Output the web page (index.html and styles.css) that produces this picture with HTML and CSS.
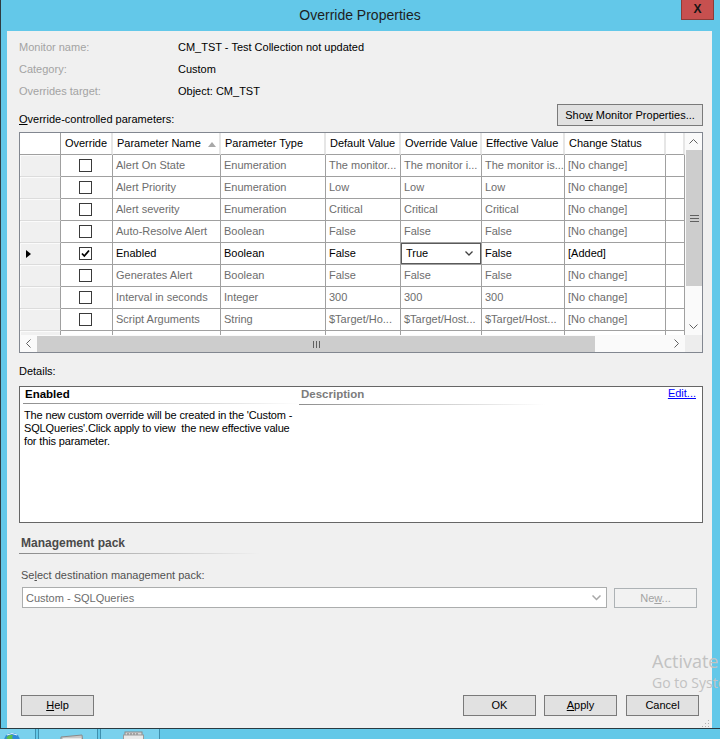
FILE: index.html
```html
<!DOCTYPE html>
<html>
<head>
<meta charset="utf-8">
<title>Override Properties</title>
<link rel="stylesheet" href="styles.css">
</head>
<body>
<div class="window">
  <div class="titlebar">
    <div class="title">Override Properties</div>
    <div class="close">X</div>
  </div>
  <div class="client">
    <div class="info">
      <div class="lbl">Monitor name:</div><div class="val">CM_TST - Test Collection not updated</div>
      <div class="lbl">Category:</div><div class="val">Custom</div>
      <div class="lbl">Overrides target:</div><div class="val">Object: CM_TST</div>
    </div>
    <div class="toolbar">
      <div class="cap"><u>O</u>verride-controlled parameters:</div>
      <button class="btn show">Sho<u>w</u> Monitor Properties...</button>
    </div>

    <div class="grid">
      <div class="gbody">
        <div class="row head">
          <div class="hc hc0"></div>
          <div class="hc center">Override</div>
          <div class="hc sort">Parameter Name<span class="sortarrow"></span></div>
          <div class="hc">Parameter Type</div>
          <div class="hc">Default Value</div>
          <div class="hc">Override Value</div>
          <div class="hc">Effective Value</div>
          <div class="hc">Change Status</div>
          <div class="hc"></div>
        </div>

        <div class="row">
          <div class="rh"></div>
          <div class="c chk"><span class="box"></span></div>
          <div class="c">Alert On State</div>
          <div class="c">Enumeration</div>
          <div class="c">The monitor...</div>
          <div class="c">The monitor i...</div>
          <div class="c">The monitor is...</div>
          <div class="c">[No change]</div>
          <div class="c"></div>
        </div>
        <div class="row">
          <div class="rh"></div>
          <div class="c chk"><span class="box"></span></div>
          <div class="c">Alert Priority</div>
          <div class="c">Enumeration</div>
          <div class="c">Low</div>
          <div class="c">Low</div>
          <div class="c">Low</div>
          <div class="c">[No change]</div>
          <div class="c"></div>
        </div>
        <div class="row">
          <div class="rh"></div>
          <div class="c chk"><span class="box"></span></div>
          <div class="c">Alert severity</div>
          <div class="c">Enumeration</div>
          <div class="c">Critical</div>
          <div class="c">Critical</div>
          <div class="c">Critical</div>
          <div class="c">[No change]</div>
          <div class="c"></div>
        </div>
        <div class="row">
          <div class="rh"></div>
          <div class="c chk"><span class="box"></span></div>
          <div class="c">Auto-Resolve Alert</div>
          <div class="c">Boolean</div>
          <div class="c">False</div>
          <div class="c">False</div>
          <div class="c">False</div>
          <div class="c">[No change]</div>
          <div class="c"></div>
        </div>
        <div class="row active">
          <div class="rh"><span class="pointer"></span></div>
          <div class="c chk"><span class="box"><svg width="11" height="11" viewBox="0 0 11 11"><path d="M2 5.5 L4.3 8 L9 2.5" fill="none" stroke="#000" stroke-width="1.8"/></svg></span></div>
          <div class="c">Enabled</div>
          <div class="c">Boolean</div>
          <div class="c">False</div>
          <div class="c editing"><div class="gcombo"><span>True</span><svg width="8" height="5" viewBox="0 0 8 5"><path d="M0.5 0.5 L4 4 L7.5 0.5" fill="none" stroke="#404040" stroke-width="1.3"/></svg></div></div>
          <div class="c">False</div>
          <div class="c">[Added]</div>
          <div class="c"></div>
        </div>
        <div class="row">
          <div class="rh"></div>
          <div class="c chk"><span class="box"></span></div>
          <div class="c">Generates Alert</div>
          <div class="c">Boolean</div>
          <div class="c">False</div>
          <div class="c">False</div>
          <div class="c">False</div>
          <div class="c">[No change]</div>
          <div class="c"></div>
        </div>
        <div class="row">
          <div class="rh"></div>
          <div class="c chk"><span class="box"></span></div>
          <div class="c">Interval in seconds</div>
          <div class="c">Integer</div>
          <div class="c num">300</div>
          <div class="c num">300</div>
          <div class="c num">300</div>
          <div class="c">[No change]</div>
          <div class="c"></div>
        </div>
        <div class="row">
          <div class="rh"></div>
          <div class="c chk"><span class="box"></span></div>
          <div class="c">Script Arguments</div>
          <div class="c">String</div>
          <div class="c">$Target/Ho...</div>
          <div class="c">$Target/Host...</div>
          <div class="c">$Target/Host...</div>
          <div class="c">[No change]</div>
          <div class="c"></div>
        </div>
        <div class="row partial">
          <div class="rh"></div>
          <div class="c"></div><div class="c"></div><div class="c"></div><div class="c"></div>
          <div class="c"></div><div class="c"></div><div class="c"></div><div class="c"></div>
        </div>
      </div>

      <div class="vscroll">
        <div class="arrow"><svg width="17" height="17" viewBox="0 0 17 17"><path d="M4.5 10.5 L8.5 6.5 L12.5 10.5" fill="none" stroke="#606060"/></svg></div>
        <div class="vthumb"><svg width="9" height="7" viewBox="0 0 9 7"><path d="M0 0.5 H9 M0 3.5 H9 M0 6.5 H9" stroke="#606060"/></svg></div>
        <div class="track"></div>
        <div class="arrow"><svg width="17" height="17" viewBox="0 0 17 17"><path d="M4.5 6.5 L8.5 10.5 L12.5 6.5" fill="none" stroke="#606060"/></svg></div>
      </div>
      <div class="hscroll">
        <div class="arrow"><svg width="17" height="17" viewBox="0 0 17 17"><path d="M10.5 4.5 L6.5 8.5 L10.5 12.5" fill="none" stroke="#606060"/></svg></div>
        <div class="hthumb"><svg width="7" height="7" viewBox="0 0 7 7"><path d="M0.5 0 V7 M3.5 0 V7 M6.5 0 V7" stroke="#606060"/></svg></div>
        <div class="track"></div>
        <div class="arrow"><svg width="17" height="17" viewBox="0 0 17 17"><path d="M6.5 4.5 L10.5 8.5 L6.5 12.5" fill="none" stroke="#606060"/></svg></div>
      </div>
      <div class="corner"></div>
    </div>

    <div class="cap details-lbl">Details:</div>
    <div class="details">
      <div class="dleft">
        <div class="dhead">Enabled</div>
        <p class="dtext">The new custom override will be created in the 'Custom -<br>SQLQueries'.Click apply to view&nbsp; the new effective value<br>for this parameter.</p>
      </div>
      <div class="dright">
        <div class="dhead dhead2">Description</div>
      </div>
      <a class="edit" href="#">Edit...</a>
    </div>

    <div class="mp-head">Management pack</div>
    <div class="mp-line"></div>
    <div class="cap sel-lbl">Se<u>l</u>ect destination management pack:</div>
    <div class="mp-row">
      <div class="combo"><span>Custom - SQLQueries</span><svg width="9" height="6" viewBox="0 0 9 6"><path d="M0.5 0.5 L4.5 4.5 L8.5 0.5" fill="none" stroke="#a8a8a8" stroke-width="1.5"/></svg></div>
      <button class="btn new" disabled>Ne<u>w</u>...</button>
    </div>

    <div class="actions">
      <button class="btn act help"><u>H</u>elp</button>
      <button class="btn act ok">OK</button>
      <button class="btn act apply"><u>A</u>pply</button>
      <button class="btn act cancel">Cancel</button>
    </div>
    <svg class="grip" width="9" height="9" viewBox="0 0 9 9"><g fill="#b0b0b0"><rect x="7" y="1" width="1" height="1"/><rect x="4" y="4" width="1" height="1"/><rect x="7" y="4" width="1" height="1"/><rect x="1" y="7" width="1" height="1"/><rect x="4" y="7" width="1" height="1"/><rect x="7" y="7" width="1" height="1"/></g></svg>
  </div>
</div>

<div class="taskbar">
  <div class="tb tb1"><svg width="18" height="18" viewBox="0 0 18 18"><circle cx="9" cy="9" r="8" fill="#2f8ad8"/><path d="M3 6 Q6 2 10 3 Q8 6 11 8 Q7 9 5 7 Z" fill="#5cc04a"/><path d="M4 3 Q9 0 14 3" fill="none" stroke="#e8f4ff" stroke-width="1"/></svg></div>
  <div class="tb tb2"><svg width="24" height="10" viewBox="0 0 24 10"><path d="M1 4 L22 2 L23 10 L1 10 Z" fill="#c8c8c8" stroke="#8a8a8a"/><rect x="3" y="5" width="18" height="5" fill="#e6e6e6"/></svg></div>
  <div class="tb tb3"><svg width="21" height="10" viewBox="0 0 21 10"><rect x="2" y="1" width="17" height="9" fill="#d8d8d8" stroke="#8a8a8a"/><path d="M5 2 V4 M8 2 V4 M11 2 V4 M14 2 V4" stroke="#707070"/><rect x="0.5" y="4" width="20" height="6" fill="#eaeaea" stroke="#9a9a9a"/></svg></div>
</div>

<div class="watermark">
  <div class="wm1">Activate Windows</div>
  <div class="wm2">Go to System in Control Panel to activate Windows.</div>
</div>
</body>
</html>
```

FILE: styles.css
```css
* { box-sizing: border-box; margin: 0; padding: 0; }
html, body { width: 720px; height: 739px; overflow: hidden; }
body {
  background: #63c8e9;
  font-family: "Liberation Sans", Arial, sans-serif;
  font-size: 11px;
  color: #000;
  position: relative;
}
u { text-decoration: underline; text-underline-offset: 1px; }

.window {
  height: 728px;
  display: flex;
  flex-direction: column;
  border-left: 1px solid #2e3c42;
}
.titlebar {
  height: 31px;
  flex: none;
  display: flex;
  justify-content: center;
  position: relative;
}
.title {
  font-size: 14px;
  line-height: 30px;
  color: #1e1e1e;
  padding-right: 1px;
}
.close {
  position: absolute;
  right: 6px;
  top: 0;
  width: 33px;
  height: 20px;
  background: #c7504f;
  border: 1px solid #8c3c38;
  border-top: none;
  font-weight: bold;
  font-size: 12px;
  line-height: 19px;
  text-align: center;
  color: #151515;
}

.client {
  flex: 1;
  margin: 0 8px 0 6px;
  background: #f0f0f0;
  padding: 5px 9px 12px 12px;
  display: flex;
  flex-direction: column;
  position: relative;
}

.info {
  display: grid;
  grid-template-columns: 159px 1fr;
  grid-auto-rows: 22px;
  line-height: 22px;
}
.lbl { color: #a3a3a3; }
.val { color: #000; }

.toolbar {
  margin-top: 2px;
  height: 22px;
  display: flex;
  justify-content: space-between;
  align-items: flex-end;
}
.cap { line-height: 13px; color: #000; }

.btn {
  font-family: inherit;
  font-size: 11px;
  color: #000;
  background: #e1e1e1;
  border: 1px solid #7a7a7a;
  line-height: 19px;
}
.show { width: 146px; height: 22px; }

/* grid */
.grid {
  margin-top: 6px;
  width: 684px;
  border: 1px solid #828790;
  display: grid;
  grid-template-columns: 665px 17px;
  grid-template-rows: 202px 17px;
  background: #fff;
}
.gbody { overflow: hidden; }
.row {
  display: grid;
  grid-template-columns: 41px 52px 108px 105px 75px 81px 83px 101px 19px;
  height: 22px;
}
.row.partial { height: 4px; }
.hc {
  background: #fff;
  border-right: 2px solid #e6e6e6;
  border-bottom: 1px solid #a0a0a0;
  line-height: 21px;
  padding-left: 4px;
  white-space: nowrap;
  overflow: hidden;
  position: relative;
}
.hc0 { border-right: 1px solid #a0a0a0; }
.hc.center { text-align: center; padding-left: 0; }
.sortarrow {
  position: absolute;
  left: 95px;
  top: 9px;
  width: 0; height: 0;
  border-left: 4.5px solid transparent;
  border-right: 4.5px solid transparent;
  border-bottom: 5px solid #a8a8a8;
}
.rh {
  background: #f0f0f0;
  border-right: 1px solid #a0a0a0;
  border-bottom: 1px solid #dcdcdc;
  box-shadow: inset 1px 1px 0 #fbfbfb;
  display: flex;
  align-items: center;
  padding-left: 6px;
}
.pointer {
  width: 0; height: 0;
  border-left: 5px solid #000;
  border-top: 4px solid transparent;
  border-bottom: 4px solid transparent;
}
.c {
  border-right: 1px solid #a0a0a0;
  border-bottom: 1px solid #a0a0a0;
  padding-left: 3px;
  line-height: 21px;
  white-space: nowrap;
  overflow: hidden;
  color: #6d6d6d;
}
.row.partial .c, .row.partial .rh { border-bottom: none; }
.row.active .c { color: #000; }
.c.chk {
  display: flex;
  justify-content: center;
  align-items: center;
  padding-left: 0;
}
.box {
  width: 13px;
  height: 13px;
  border: 1px solid #3a3a3a;
  background: #fff;
  display: flex;
  align-items: center;
  justify-content: center;
  margin-right: 2px;
}
.c.editing { padding-left: 0; }
.gcombo {
  height: 21px;
  border: 1px solid #5a5a5a;
  display: flex;
  align-items: center;
  justify-content: space-between;
  padding: 0 7px 0 4px;
  color: #000;
  line-height: 19px;
}

.vscroll {
  display: flex;
  flex-direction: column;
  background: #fafafa;
}
.arrow { width: 17px; height: 17px; flex: none; background: #fafafa; }
.arrow svg { display: block; }
.vthumb {
  height: 136px;
  background: #cdcdcd;
  display: flex;
  align-items: center;
  justify-content: center;
  margin-left: 1px;
}
.track { flex: 1; background: #fafafa; }
.hscroll {
  display: flex;
  background: #fafafa;
}
.hthumb {
  width: 558px;
  background: #cdcdcd;
  display: flex;
  align-items: center;
  justify-content: center;
  margin-top: 1px;
}
.corner { background: #ededed; }

/* details */
.details-lbl { margin-top: 12px; }
.details {
  margin-top: 8px;
  height: 137px;
  border: 1px solid #666;
  background: #fff;
  display: flex;
  align-items: flex-start;
}
.dleft { width: 279px; padding-left: 3px; }
.dhead {
  height: 17px;
  line-height: 15px;
  font-weight: bold;
  font-size: 11.5px;
  padding-left: 2px;
  background: linear-gradient(to right, #8e8e8e, #ffffff) left bottom / 100% 1px no-repeat;
}
.dtext {
  margin-top: 5px;
  padding-left: 1px;
  line-height: 13px;
  white-space: nowrap;
  letter-spacing: -0.15px;
}
.dright { width: 246px; }
.dhead2 {
  height: 18px;
  color: #7c7c7c;
  background: linear-gradient(to right, #8e8e8e, #f4f4f4 90%, #ffffff) left bottom / 100% 1px no-repeat;
}
.edit {
  margin-left: auto;
  margin-right: 6px;
  line-height: 13px;
  color: #0000ff;
  text-decoration: underline;
}

/* management pack */
.mp-head {
  margin-top: 13px;
  padding-left: 2px;
  font-weight: bold;
  font-size: 12px;
  line-height: 15px;
  color: #4a4a4a;
}
.mp-line {
  margin-top: 2px;
  width: 241px;
  height: 1px;
  background: linear-gradient(to right, #8a8a8a, #f0f0f0);
}
.sel-lbl {
  margin-top: 15px;
  padding-left: 2px;
  color: #505050;
}
.mp-row {
  margin-top: 5px;
  display: flex;
  align-items: flex-start;
}
.combo {
  margin-left: 3px;
  width: 585px;
  height: 21px;
  border: 1px solid #abadad;
  background: #fff;
  display: flex;
  align-items: center;
  justify-content: space-between;
  padding: 0 5px 0 3px;
  color: #6d6d6d;
}
.new {
  margin-left: 7px;
  margin-top: 1px;
  width: 83px;
  height: 20px;
  background: #f2f2f2;
  border-color: #adb2b5;
  color: #a3a3a3;
}

.actions {
  margin-top: auto;
  display: flex;
  padding-left: 2px;
  padding-right: 4px;
}
.act { width: 73px; height: 21px; }
.ok { margin-left: auto; }
.apply { margin-left: 8px; }
.cancel { margin-left: 9px; }
.grip { position: absolute; right: 2px; bottom: 0; }

/* taskbar */
.taskbar {
  height: 11px;
  border-top: 1px solid #2a3a40;
  background: #63c8e8;
  display: flex;
  gap: 2px;
  overflow: hidden;
}
.tb {
  height: 10px;
  background: #7ad1ed;
  border-left: 1px solid #3f8fae;
  border-right: 1px solid #3f8fae;
  overflow: hidden;
}
.tb svg { display: block; }
.tb1 { width: 36px; border-left: none; padding: 3px 0 0 3px; }
.tb2 { width: 60px; padding: 4px 0 0 21px; }
.tb3 { width: 60px; padding: 2px 0 0 22px; }

/* watermark (clipped by the screen edge, as in the screenshot) */
.watermark {
  position: absolute;
  left: 652px;
  top: 649px;
  width: 68px;
  overflow: hidden;
  white-space: nowrap;
  color: #c2c2c2;
  font-family: "Open Sans", "Noto Sans", sans-serif;
  pointer-events: none;
}
.wm1 { font-size: 18px; line-height: 24px; }
.wm2 { font-size: 14px; line-height: 20px; }
```
